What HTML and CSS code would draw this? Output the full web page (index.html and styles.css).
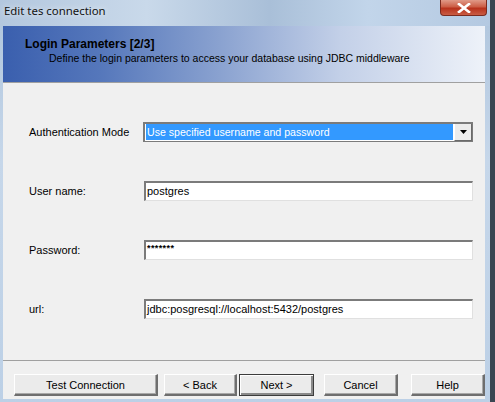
FILE: index.html
```html
<!DOCTYPE html>
<html lang="en">
<head>
  <meta charset="UTF-8">
  <title>Edit tes connection</title>
  <link rel="stylesheet" href="styles.css">
</head>
<body>

<div class="window">
  <div class="titlebar">
    <span class="title">Edit tes connection</span>
    <div class="close-btn">
      <svg width="14" height="10" viewBox="0 0 14 10">
        <path d="M2 1 L12 9 M12 1 L2 9" stroke="#ffffff" stroke-width="2.6" stroke-linecap="square"/>
      </svg>
    </div>
  </div>

  <div class="client">
    <div class="header">
      <div class="header-title">Login Parameters [2/3]</div>
      <div class="header-sub">Define the login parameters to access your database using JDBC middleware</div>
    </div>

    <div class="form">
      <div class="form-row">
        <label class="label">Authentication Mode</label>
        <div class="combo">
          <span class="combo-value">Use specified username and password</span>
          <span class="combo-btn">
            <svg width="7" height="4" viewBox="0 0 7 4"><path d="M0 0 H7 L3.5 4 Z" fill="#000"/></svg>
          </span>
        </div>
      </div>
      <div class="form-row">
        <label class="label">User name:</label>
        <div class="field">postgres</div>
      </div>
      <div class="form-row">
        <label class="label">Password:</label>
        <div class="field field-pass">*******</div>
      </div>
      <div class="form-row">
        <label class="label">url:</label>
        <div class="field">jdbc:posgresql://localhost:5432/postgres</div>
      </div>
    </div>

    <div class="footer">
      <button class="btn btn-test">Test Connection</button>
      <button class="btn btn-back">&lt; Back</button>
      <button class="btn btn-next">Next &gt;</button>
      <button class="btn btn-cancel">Cancel</button>
      <button class="btn btn-help">Help</button>
    </div>
  </div>
</div>

</body>
</html>
```

FILE: styles.css
```css
body {
  margin: 0;
  padding: 0;
  background-color: #2f3a44;
  font-family: "Liberation Sans", Arial, sans-serif;
  font-size: 11px;
  color: #000;
}

.window {
  width: 490px;
  height: 402px;
  display: flex;
  flex-direction: column;
  background: linear-gradient(180deg, #aec4dc 0%, #c6d7ea 40%, #bcd0e6 100%);
  border-right: 5px solid #3a4652;
  overflow: hidden;
}

.titlebar {
  height: 26px;
  display: flex;
  align-items: flex-start;
  justify-content: space-between;
  background: linear-gradient(90deg, #b3c7de 0%, #c9d9ea 30%, #a9bfd8 55%, #c2d5ea 75%, #b4c9e1 100%);
}

.title {
  font-family: "Noto Sans", "DejaVu Sans", sans-serif;
  font-size: 11.4px;
  padding: 3px 0 0 4px;
  color: #111;
  text-shadow: 0 0 6px rgba(255, 255, 255, 0.9);
}

.close-btn {
  width: 47px;
  height: 16px;
  margin-right: 3px;
  display: flex;
  align-items: center;
  justify-content: center;
  background: linear-gradient(180deg, #e09a88 0%, #cc5e46 45%, #b8321c 55%, #c95c44 100%);
  border: 1px solid #7b2b1f;
  border-top: none;
  border-radius: 0 0 4px 4px;
  box-sizing: border-box;
}

.client {
  margin-left: 3px;
  width: 482px;
  height: 373px;
  background-color: #f0f0f0;
  display: flex;
  flex-direction: column;
}

.header {
  height: 57px;
  box-sizing: border-box;
  padding: 11px 0 0 22px;
  background: linear-gradient(90deg, #3a5fae 0%, #5577bb 20%, #8aa2d0 45%, #c3d0e8 70%, #eef2f9 100%);
  border-bottom: 1px solid #a0a0a0;
}

.header-title {
  font-weight: bold;
  font-size: 12px;
  line-height: 14px;
}

.header-sub {
  padding-left: 24px;
  font-size: 10.5px;
  line-height: 15px;
}

.form {
  display: flex;
  flex-direction: column;
  gap: 39px;
  padding: 39px 0 0 26px;
  height: 278px;
  box-sizing: border-box;
  border-bottom: 1px solid #a0a0a0;
}

.form-row {
  display: flex;
  align-items: center;
  height: 20px;
}

.label {
  width: 115px;
}

.field {
  width: 329px;
  height: 20px;
  box-sizing: border-box;
  background-color: #fff;
  border-top: 2px solid #7b7b7b;
  border-left: 2px solid #7b7b7b;
  border-right: 1px solid #e0e0e0;
  border-bottom: 1px solid #e0e0e0;
  padding: 1px 0 0 1px;
  line-height: 15px;
  font-size: 11px;
}

.field-pass {
  font-size: 9px;
  line-height: 10px;
  font-weight: bold;
  letter-spacing: 0.4px;
}

.combo {
  width: 330px;
  height: 20px;
  margin-left: -1px;
  box-sizing: border-box;
  display: flex;
  border: 1px solid #7b7b7b;
  border-top-width: 2px;
  border-left-width: 2px;
  background-color: #fff;
}

.combo-value {
  flex: 1;
  margin: 0 1px 1px 1px;
  background-color: #3399ff;
  color: #fff;
  font-size: 10.6px;
  line-height: 16px;
  padding-left: 1px;
}

.combo-btn {
  width: 16px;
  display: flex;
  align-items: center;
  justify-content: center;
  background-color: #ececec;
  border-left: 1px solid #fff;
  border-right: 1px solid #6a6a6a;
  border-bottom: 1px solid #6a6a6a;
}

.footer {
  display: flex;
  padding: 13px 0 0 11px;
}

.btn {
  height: 22px;
  box-sizing: border-box;
  font-family: "Liberation Sans", Arial, sans-serif;
  font-size: 11px;
  padding: 0;
  background-color: #ebebeb;
  color: #000;
  border-top: 1px solid #fff;
  border-left: 1px solid #fff;
  border-right: 2px solid #6e6e6e;
  border-bottom: 2px solid #6e6e6e;
  box-shadow: inset -1px -1px 0 #a8a8a8;
}

.btn-test {
  width: 144px;
}

.btn-back {
  width: 73px;
  margin-left: 6px;
}

.btn-next {
  width: 75px;
  margin-left: 2px;
  border: 1px solid #3c3c3c;
  box-shadow: inset 1px 1px 0 #fff, inset -2px -2px 0 #8a8a8a;
}

.btn-cancel {
  width: 74px;
  margin-left: 10px;
}

.btn-help {
  width: 74px;
  margin-left: 13px;
}
```
